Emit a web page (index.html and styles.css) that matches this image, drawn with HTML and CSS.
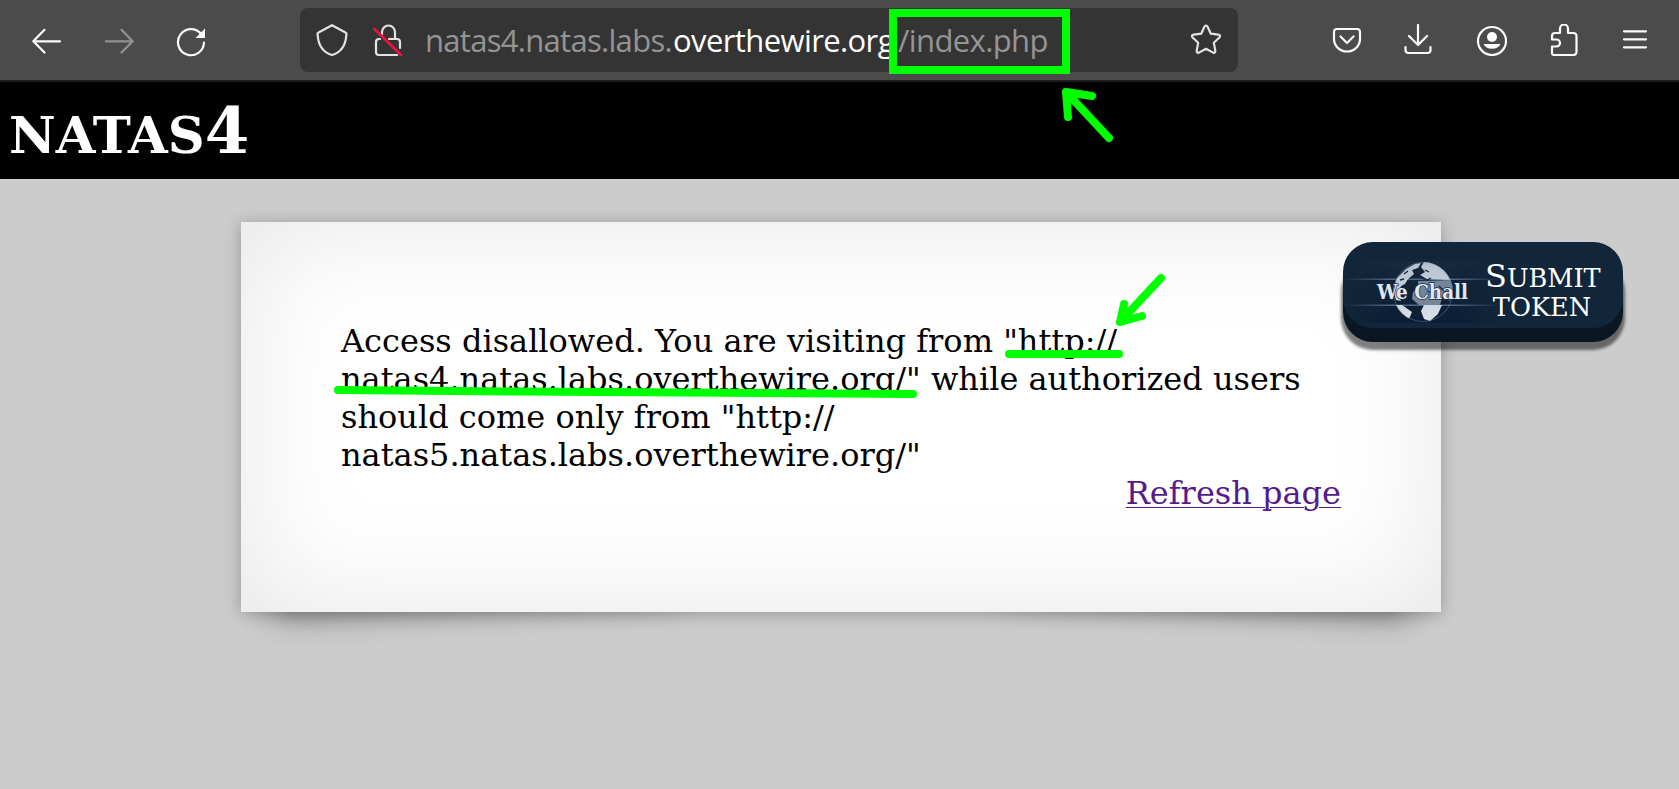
FILE: index.html
```html
<!DOCTYPE html>
<html lang="en">
<head>
<meta charset="utf-8">
<title>natas4</title>
<link rel="stylesheet" href="styles.css">
</head>
<body>
<header class="toolbar">
  <nav class="nav">
    <svg class="icon" viewBox="0 0 32 32"><path d="M29 16.300H2.500M13.500 4.800 2.300 16.300 13.500 27.500"/></svg>
    <svg class="icon icon-off" viewBox="0 0 32 32"><path d="M3 16.300H29M18.500 4.800 29.700 16.300 18.500 27.500"/></svg>
    <svg class="icon" viewBox="0 0 32 32"><path d="M26.500 9.500A13 13 0 1 0 29 17.500"/><path class="solid" d="M30 3.500V13H20.500Z"/></svg>
  </nav>
  <div class="urlbar">
    <svg class="icon soft" viewBox="0 0 32 32"><path d="M16 1.200 29 8.300Q31 9 30.300 11C29.800 20 26 28 16 31 6 28 2.200 20 1.700 11Q1 9 3 8.300Z"/></svg>
    <svg class="icon soft lock" viewBox="0 0 32 32"><path d="M10 10V8a6.500 6.500 0 0 1 13 0V15M17 15h8a3 3 0 0 1 3 3v6M8 15H7a3 3 0 0 0-3 3v10a3 3 0 0 0 3 3h18"/><path class="slash" d="M2.500 5 29 31"/></svg>
    <div class="url"><span class="sub">natas4.natas.labs.</span><span class="domain">overthewire.org</span><span class="path">/index.php</span></div>
    <svg class="icon soft star" viewBox="0 0 32 32"><path d="M16 1.500q1 0 1.600 1.200l3.200 7 7.600 1q2.800.6 1 2.800l-5.600 5.300 1.500 7.800q.2 2.800-2.200 2L16 24.800 8.900 28.600q-2.400.8-2.200-2l1.500-7.800-5.600-5.300q-1.800-2.200 1-2.800l7.600-1 3.200-7Q15 1.500 16 1.500Z"/></svg>
  </div>
  <div class="tools">
    <svg class="icon" viewBox="0 0 32 32"><path d="M6 5H26a3 3 0 0 1 3 3v7a13 12.500 0 0 1-26 0V8a3 3 0 0 1 3-3ZM9.500 12.500l6.500 6.500 6.500-6.500"/></svg>
    <svg class="icon" viewBox="0 0 32 32"><path d="M15 1v20M6 12l9 9 9-9M2.500 23v3a3 3 0 0 0 3 3h19a3 3 0 0 0 3-3v-3"/></svg>
    <svg class="icon" viewBox="0 0 32 32"><circle cx="17" cy="17" r="14"/><circle class="solid" cx="17" cy="13" r="5"/><path class="solid" d="M8.500 20h17a9 7 0 0 1-17 0Z"/></svg>
    <svg class="icon" viewBox="0 0 32 32"><path d="M5 15.500V12a3 3 0 0 1 3-3h5V4.500a4 4 0 0 1 8 0V9h5.500a3 3 0 0 1 3 3v16a3 3 0 0 1-3 3H7a2 2 0 0 1-2-2V22.500h4.500a3.500 3.500 0 0 0 0-7Z"/></svg>
    <svg class="icon" viewBox="0 0 32 32"><path d="M5 7.300h22M5 15.300h22M5 23.300h22"/></svg>
  </div>
</header>
<h1 class="heading"><span class="small">NATAS</span>4</h1>
<main class="page">
  <section class="card">
    <p class="message">Access disallowed. You are visiting from "http://<br>natas4.natas.labs.overthewire.org/" while authorized users<br>should come only from "http://<br>natas5.natas.labs.overthewire.org/"</p>
    <a class="refresh" href="#">Refresh page</a>
  </section>
</main>
<div class="submit">
  <svg class="logo" viewBox="0 0 158 62">
    <defs>
      <linearGradient id="sky" x2="0" y2="1"><stop offset="0" stop-color="#182a3e"/><stop offset=".3" stop-color="#11243a"/><stop offset="1" stop-color="#0b1e35"/></linearGradient>
      <linearGradient id="fade"><stop offset="0" stop-color="#fff" stop-opacity="0"/><stop offset=".3" stop-color="#fff"/><stop offset=".7" stop-color="#fff"/><stop offset="1" stop-color="#fff" stop-opacity="0"/></linearGradient>
      <mask id="sides"><rect width="158" height="62" fill="url(#fade)"/></mask>
      <linearGradient id="land" x2="0" y2="1"><stop offset="0" stop-color="#b5c0cf"/><stop offset="1" stop-color="#dce2ea"/></linearGradient>
      <clipPath id="ball"><circle cx="80" cy="31" r="30"/></clipPath>
    </defs>
    <g mask="url(#sides)">
      <rect width="158" height="62" fill="url(#sky)"/>
      <rect y="17.500" width="158" height="1.500" fill="#50677f"/>
      <rect y="43.500" width="158" height="1.500" fill="#50677f"/>
    </g>
    <g clip-path="url(#ball)">
      <path fill="url(#land)" d="M50 28 54 17 63 8 72 3 78 2 75 7 69 9 71 13 65 18 62 23 58 25 55 34 58 40 53 39ZM78 6 81 1 92 1 104 10 109 19 84 18 77 14 82 11ZM81 44 99 44 95 53 87 60 81 58 78 50ZM50 44 59 44 69 51 66 58 72 62 61 60 52 50Z"/>
      <path fill="#75869b" d="M75 20 110 19 111 34 106 40 103 33 99 37 97 44H76L69 38 70 31 75 28Z"/>
      <path fill="none" stroke="#152840" stroke-width="1.300" d="m61 13 4-3m-8 9 4-1m21-9 4 2m-8 6 6 2 4-2m-2 6 5 2m5 0 4 4 4-1m-20 2 5 2"/>
    </g>
    <circle cx="80" cy="31" r="29.500" fill="none" stroke="#8495aa" stroke-width=".6" opacity=".7"/>
    <text class="brand" x="34" y="37.500" textLength="91" lengthAdjust="spacingAndGlyphs">We Chall</text>
  </svg>
  <div class="label"><span class="cap">S</span>UBMIT<br>TOKEN</div>
</div>
<svg class="marks" viewBox="0 0 1679 789">
  <rect class="box" x="893" y="13" width="173" height="57"/>
  <path d="M1109 138 1066 92 1092 96M1066 92 1068 117M1161 278 1120 322 1142 316M1120 322 1124 304M1009 354H1119M338 390 520 391.500 913 394"/>
</svg>
</body>
</html>
```
FILE: styles.css
```css
body {
  margin: 0;
  height: 789px;
  overflow: hidden;
  display: flex;
  flex-direction: column;
  background: #ccc;
  font-family: "DejaVu Serif", serif;
}

.toolbar {
  box-sizing: border-box;
  height: 82px;
  flex: none;
  display: flex;
  align-items: flex-start;
  padding: 8px 28px 0 31px;
  background: #4b4b4b;
  border-bottom: 2px solid #1c1c1c;
}

.nav { display: flex; gap: 40px; width: 269px; padding-top: 17px; }
.tools { display: flex; gap: 40px; margin-left: 93px; padding-top: 16px; }

.icon {
  width: 32px;
  height: 32px;
  flex: none;
  fill: none;
  stroke: #fbfbfe;
  stroke-width: 2.2;
  stroke-linecap: round;
  stroke-linejoin: round;
}
.icon-off { opacity: .4; }
.soft { stroke: #e3e3e3; }
.icon .solid { fill: #fbfbfe; stroke: none; }
.icon .slash { stroke: #e9133f; stroke-width: 2.8; }

.urlbar {
  box-sizing: border-box;
  width: 938px;
  height: 64px;
  display: flex;
  align-items: center;
  padding: 0 16px;
  border-radius: 8px;
  background: #343434;
}
.lock { margin-left: 24px; }
.url {
  flex: 1;
  display: flex;
  margin-left: 21px;
  white-space: nowrap;
  color: #949494;
  font: 31px/64px "Open Sans", "Noto Sans", sans-serif;
}
.sub { width: 248px; letter-spacing: -.7px; }
.domain { width: 225px; color: #fff; letter-spacing: -.6px; }
.path { letter-spacing: -.6px; }

.heading {
  box-sizing: border-box;
  height: 97px;
  flex: none;
  margin: 0;
  padding-left: 9px;
  background: #000;
  color: #fff;
  font-size: 64px;
  line-height: 97px;
}
.small { font-size: 51.2px; }

.page { position: relative; z-index: 0; padding: 43px 0 0 241px; }

.card {
  position: relative;
  box-sizing: border-box;
  width: 1200px;
  height: 390px;
  padding: 100px;
  background: #fff;
  box-shadow: 0 2px 16px rgba(0, 0, 0, .27), inset 0 0 120px rgba(0, 0, 0, .1);
  font-size: 32px;
  line-height: 38px;
}
.card::before,
.card::after {
  content: "";
  position: absolute;
  z-index: -1;
  bottom: 22px;
  left: 44px;
  width: 400px;
  height: 55%;
  box-shadow: 0 16px 32px rgba(0, 0, 0, .4);
  transform: skew(-8deg) rotate(-3deg);
}
.card::after {
  left: auto;
  right: 44px;
  transform: skew(8deg) rotate(3deg);
}
.message { margin: 0; white-space: nowrap; }
.refresh {
  display: block;
  text-align: right;
  color: #551a8b;
  text-decoration-thickness: 1px;
  text-underline-offset: 3px;
}

.submit {
  position: absolute;
  z-index: 1;
  left: 1343px;
  top: 242px;
  box-sizing: border-box;
  width: 280px;
  height: 86px;
  display: flex;
  align-items: center;
  padding-top: 13px;
  border-radius: 30px;
  background: #11263a;
  box-shadow: 0 14px 0 #0a1622, 0 20px 3px 2px rgba(0, 0, 0, .5);
}
.logo { width: 158px; height: 62px; flex: none; }
.brand {
  font: bold 20px "DejaVu Serif", serif;
  fill: #dfe7f0;
  stroke: #182a42;
  stroke-width: 1.5px;
  paint-order: stroke;
}
.label {
  margin-left: -16px;
  padding-top: 3px;
  width: 114px;
  text-align: center;
  white-space: nowrap;
  color: #fff;
  font-size: 25.6px;
  line-height: 29px;
}
.cap { font-size: 32px; line-height: 0; }

.marks {
  position: absolute;
  z-index: 2;
  left: 0;
  top: 0;
  width: 1679px;
  height: 789px;
  fill: none;
  stroke: #0f0;
  stroke-width: 8;
  stroke-linecap: round;
  stroke-linejoin: round;
  pointer-events: none;
}
.box { stroke-linejoin: miter; }
```
